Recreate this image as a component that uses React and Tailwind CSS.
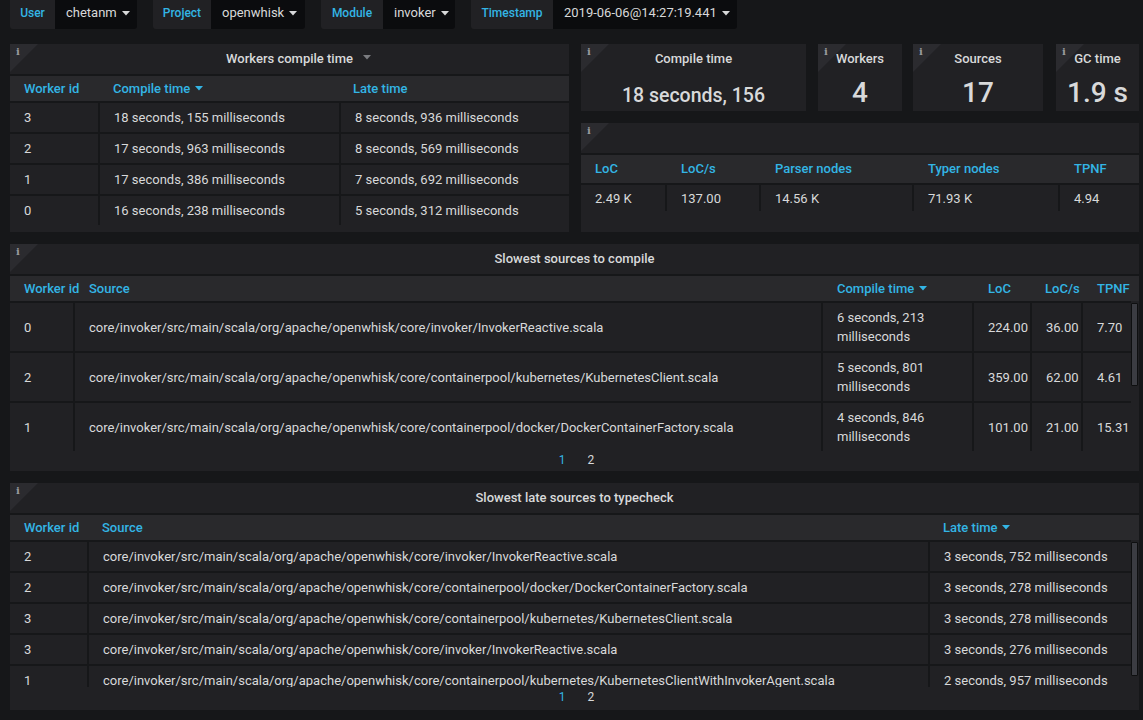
import React from "react";

const Caret = ({ color = "#d8d9da", className = "" }) => (
  <svg width="8" height="5" viewBox="0 0 8 5" className={className}>
    <path d="M0 0 L8 0 L4 4.5 Z" fill={color} />
  </svg>
);

function VarGroup({ label, value, labelW, valueW }) {
  return (
    <div className="flex mr-[16px] h-[29px] rounded-b-[3px] overflow-hidden">
      <div
        className="bg-[#212124] flex items-center justify-center pb-[3px] text-[#33b5e5] font-medium text-[12px]"
        style={{ width: labelW }}
      >
        {label}
      </div>
      <div
        className="bg-[#0b0c0e] flex items-center pl-[11px] pb-[3px] text-[#d8d9da] text-[13px] gap-[5px]"
        style={{ width: valueW }}
      >
        <span>{value}</span>
        <Caret />
      </div>
    </div>
  );
}

function Panel({ title, caret, className = "", children }) {
  return (
    <div className={"bg-[#212124] relative flex flex-col overflow-hidden " + className}>
      <div className="absolute left-0 top-0 w-0 h-0 border-t-[28px] border-t-[#2b2b2f] border-r-[28px] border-r-transparent" />
      <span className="absolute left-[6px] top-[3px] text-[10px] leading-[10px] font-bold text-[#9a9b9e] font-['DejaVu_Serif',serif]">
        i
      </span>
      <div className="h-[30px] shrink-0 flex items-center justify-center text-[13px] font-medium text-[#d8d9da]">
        <span className="relative">
          {title}
          {caret && (
            <span className="absolute left-full top-[6px] ml-[10px] flex">
              <Caret color="#7b7c80" />
            </span>
          )}
        </span>
      </div>
      {children}
    </div>
  );
}

function HeaderRow({ cols, h = "h-[27px]" }) {
  return (
    <div className={"flex shrink-0 bg-[#29292c] border-t-2 border-[#161719] " + h}>
      {cols.map((c, i) => (
        <div
          key={i}
          className="flex items-center pl-[14px] whitespace-nowrap text-[13px] font-medium text-[#33b5e5] gap-[5px]"
          style={c.w ? { width: c.w, flexShrink: 0 } : { flex: 1 }}
        >
          <span>{c.t}</span>
          {c.sort && <Caret color="#33b5e5" />}
        </div>
      ))}
    </div>
  );
}

function BodyRow({ cols, cells, h }) {
  return (
    <div className="flex border-t-2 border-[#161719]" style={{ height: h }}>
      {cols.map((c, i) => (
        <div
          key={i}
          className={
            "flex items-center pl-[14px] pr-[10px] text-[13px] leading-[19px] text-[#d8d9da] " +
            (i < cols.length - 1 ? "border-r-2 border-[#161719]" : "")
          }
          style={c.w ? { width: c.w, flexShrink: 0 } : { flex: 1 }}
        >
          <span className={c.wrap ? "" : "whitespace-nowrap"}>{cells[i]}</span>
        </div>
      ))}
    </div>
  );
}

function Stat({ title, value, size, pb }) {
  return (
    <Panel title={title} className="h-[67px]">
      <div className={"flex-1 flex items-end justify-center " + pb}>
        <span className={"font-medium leading-none text-[#d8d9da] " + size}>{value}</span>
      </div>
    </Panel>
  );
}

function Pager() {
  return (
    <div className="flex-1 flex items-center justify-center gap-[22px] text-[12px] pl-[4px] pb-[4px]">
      <span className="text-[#33b5e5]">1</span>
      <span className="text-[#d8d9da]">2</span>
    </div>
  );
}

function Scrollbar({ top, h }) {
  return (
    <div
      className="absolute right-[1px] w-[7px] bg-[#3b3c42] border border-[#0e0f10] rounded-[1px]"
      style={{ top, height: h }}
    />
  );
}

export default function App() {
  const w1 = [{ w: 90 }, { w: 241 }, {}];
  const w1h = [
    { t: "Worker id", w: 89 },
    { t: "Compile time", w: 240, sort: true },
    { t: "Late time" },
  ];
  const r1 = [
    ["3", "18 seconds, 155 milliseconds", "8 seconds, 936 milliseconds"],
    ["2", "17 seconds, 963 milliseconds", "8 seconds, 569 milliseconds"],
    ["1", "17 seconds, 386 milliseconds", "7 seconds, 692 milliseconds"],
    ["0", "16 seconds, 238 milliseconds", "5 seconds, 312 milliseconds"],
  ];

  const w2 = [{ w: 86 }, { w: 94 }, { w: 153 }, { w: 146 }, {}];
  const w2h = [
    { t: "LoC", w: 86 },
    { t: "LoC/s", w: 94 },
    { t: "Parser nodes", w: 153 },
    { t: "Typer nodes", w: 146 },
    { t: "TPNF" },
  ];

  const w3 = [{ w: 65 }, { w: 748 }, { w: 151, wrap: true }, { w: 58 }, { w: 51 }, { w: 48 }];
  const w3h = [
    { t: "Worker id", w: 65 },
    { t: "Source", w: 748 },
    { t: "Compile time", w: 151, sort: true },
    { t: "LoC", w: 57 },
    { t: "LoC/s", w: 52 },
    { t: "TPNF" },
  ];
  const r3 = [
    ["0", "core/invoker/src/main/scala/org/apache/openwhisk/core/invoker/InvokerReactive.scala", "6 seconds, 213 milliseconds", "224.00", "36.00", "7.70"],
    ["2", "core/invoker/src/main/scala/org/apache/openwhisk/core/containerpool/kubernetes/KubernetesClient.scala", "5 seconds, 801 milliseconds", "359.00", "62.00", "4.61"],
    ["1", "core/invoker/src/main/scala/org/apache/openwhisk/core/containerpool/docker/DockerContainerFactory.scala", "4 seconds, 846 milliseconds", "101.00", "21.00", "15.31"],
  ];

  const w4 = [{ w: 79 }, { w: 841 }, {}];
  const w4h = [
    { t: "Worker id", w: 78 },
    { t: "Source", w: 841 },
    { t: "Late time", sort: true },
  ];
  const r4 = [
    ["2", "core/invoker/src/main/scala/org/apache/openwhisk/core/invoker/InvokerReactive.scala", "3 seconds, 752 milliseconds"],
    ["2", "core/invoker/src/main/scala/org/apache/openwhisk/core/containerpool/docker/DockerContainerFactory.scala", "3 seconds, 278 milliseconds"],
    ["3", "core/invoker/src/main/scala/org/apache/openwhisk/core/containerpool/kubernetes/KubernetesClient.scala", "3 seconds, 278 milliseconds"],
    ["3", "core/invoker/src/main/scala/org/apache/openwhisk/core/invoker/InvokerReactive.scala", "3 seconds, 276 milliseconds"],
    ["1", "core/invoker/src/main/scala/org/apache/openwhisk/core/containerpool/kubernetes/KubernetesClientWithInvokerAgent.scala", "2 seconds, 957 milliseconds"],
  ];

  return (
    <div className="w-[1143px] h-[720px] overflow-hidden bg-[#161719] font-['Roboto','Noto_Sans',sans-serif]">
      <div className="flex pl-[10px]">
        <VarGroup label="User" value="chetanm" labelW={45} valueW={82} />
        <VarGroup label="Project" value="openwhisk" labelW={58} valueW={94} />
        <VarGroup label="Module" value="invoker" labelW={62} valueW={72} />
        <VarGroup label="Timestamp" value="2019-06-06@14:27:19.441" labelW={82} valueW={184} />
      </div>

      <div className="flex flex-col gap-[12px] pl-[10px] pr-[4px] pt-[15px]">
        {/* Row 1 */}
        <div className="flex gap-[12px] h-[188px]">
          <Panel title="Workers compile time" caret className="w-[559px]">
            <HeaderRow cols={w1h} h="h-[27px]" />
            {r1.map((r, i) => (
              <BodyRow key={i} cols={w1} cells={r} h={31} />
            ))}
          </Panel>
          <div className="flex-1 flex flex-col gap-[12px]">
            <div className="flex h-[67px]">
              <div className="w-[225px]">
                <Stat title="Compile time" value="18 seconds, 156" size="text-[19.5px]" pb="pb-[6px]" />
              </div>
              <div className="w-[84px] ml-[12px]">
                <Stat title="Workers" value="4" size="text-[28px]" pb="pb-[4px]" />
              </div>
              <div className="w-[130px] ml-[11px]">
                <Stat title="Sources" value="17" size="text-[28px]" pb="pb-[4px]" />
              </div>
              <div className="w-[83px] ml-[13px]">
                <Stat title="GC time" value="1.9 s" size="text-[28px]" pb="pb-[4px]" />
              </div>
            </div>
            <Panel title="" className="flex-1">
              <HeaderRow cols={w2h} h="h-[30px]" />
              <BodyRow cols={w2} cells={["2.49 K", "137.00", "14.56 K", "71.93 K", "4.94"]} h={28} />
            </Panel>
          </div>
        </div>

        {/* Row 2 */}
        <Panel title="Slowest sources to compile" className="h-[227px]">
          <HeaderRow cols={w3h} h="h-[27px]" />
          <div className="relative h-[150px] overflow-hidden shrink-0">
            <div className="w-[1121px]">
              {r3.map((r, i) => (
                <BodyRow key={i} cols={w3} cells={r} h={50} />
              ))}
            </div>
            <Scrollbar top={2} h={83} />
          </div>
          <Pager />
        </Panel>

        {/* Row 3 */}
        <Panel title="Slowest late sources to typecheck" className="h-[227px]">
          <HeaderRow cols={w4h} h="h-[27px]" />
          <div className="relative h-[147px] overflow-hidden shrink-0">
            <div className="w-[1121px]">
              {r4.map((r, i) => (
                <BodyRow key={i} cols={w4} cells={r} h={31} />
              ))}
            </div>
            <Scrollbar top={2} h={134} />
          </div>
          <Pager />
        </Panel>
      </div>
    </div>
  );
}
